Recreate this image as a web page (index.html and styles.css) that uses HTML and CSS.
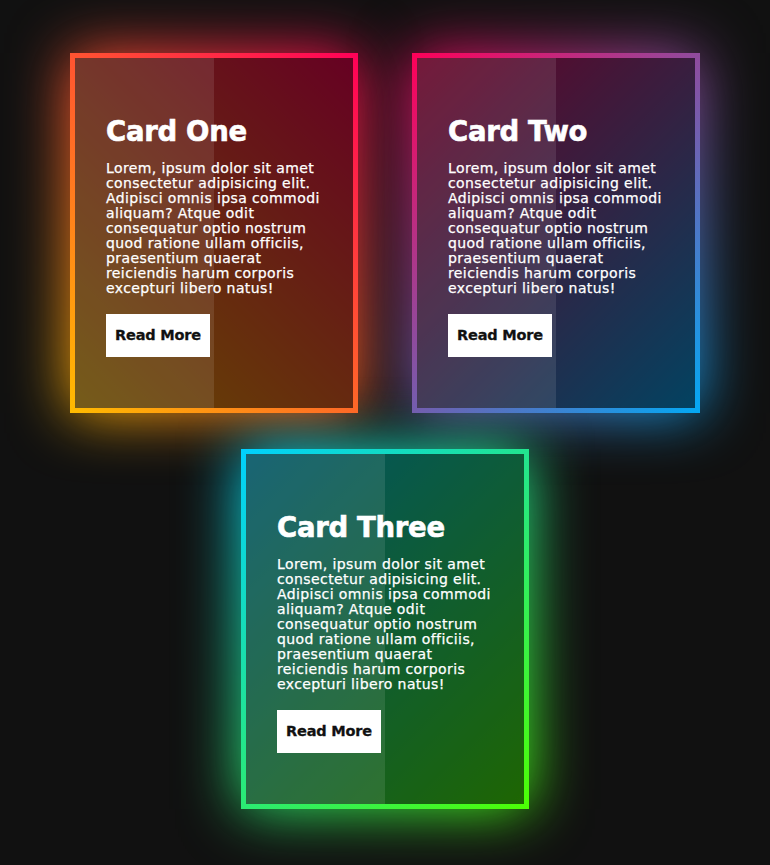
FILE: index.html
```html
<!DOCTYPE html>
<html lang="en">
<head>
<meta charset="utf-8">
<title>Glowing Cards</title>
<link rel="stylesheet" href="styles.css">
</head>
<body>
<main class="grid">
  <article class="card card-one">
    <div class="inner">
      <h2 class="title">Card One</h2>
      <p class="text">Lorem, ipsum dolor sit amet<br>consectetur adipisicing elit.<br>Adipisci omnis ipsa commodi<br>aliquam? Atque odit<br>consequatur optio nostrum<br>quod ratione ullam officiis,<br>praesentium quaerat<br>reiciendis harum corporis<br>excepturi libero natus!</p>
      <a class="btn" href="#">Read More</a>
    </div>
  </article>
  <article class="card card-two">
    <div class="inner">
      <h2 class="title">Card Two</h2>
      <p class="text">Lorem, ipsum dolor sit amet<br>consectetur adipisicing elit.<br>Adipisci omnis ipsa commodi<br>aliquam? Atque odit<br>consequatur optio nostrum<br>quod ratione ullam officiis,<br>praesentium quaerat<br>reiciendis harum corporis<br>excepturi libero natus!</p>
      <a class="btn" href="#">Read More</a>
    </div>
  </article>
  <article class="card card-three">
    <div class="inner">
      <h2 class="title">Card Three</h2>
      <p class="text">Lorem, ipsum dolor sit amet<br>consectetur adipisicing elit.<br>Adipisci omnis ipsa commodi<br>aliquam? Atque odit<br>consequatur optio nostrum<br>quod ratione ullam officiis,<br>praesentium quaerat<br>reiciendis harum corporis<br>excepturi libero natus!</p>
      <a class="btn" href="#">Read More</a>
    </div>
  </article>
</main>
</body>
</html>
```
FILE: styles.css
```css
* { box-sizing: border-box; }
html, body { margin: 0; padding: 0; }
body {
  background: #111111;
  font-family: "DejaVu Sans", "Noto Sans", sans-serif;
  color: #fff;
  min-height: 865px;
}
.grid {
  display: flex;
  flex-wrap: wrap;
  justify-content: center;
  column-gap: 54px;
  row-gap: 36px;
  padding: 53px 70px 0;
}
.card {
  position: relative;
  width: 288px;
  height: 360px;
  padding: 5px;
}
.card::after {
  content: "";
  position: absolute;
  inset: 0;
  background: inherit;
  filter: blur(30px);
  z-index: -1;
}
.card-one { background: linear-gradient(45deg, #ffbc00, #ff0058); }
.card-two { background: linear-gradient(315deg, #03a9f4, #ff0058); }
.card-three { background: linear-gradient(315deg, #4dff03, #00d0ff); }
.inner {
  position: relative;
  height: 100%;
  background: rgba(0, 0, 0, 0.6);
  padding: 53px 0 0 31px;
  display: flex;
  flex-direction: column;
  align-items: flex-start;
}
.inner::before {
  content: "";
  position: absolute;
  top: 0;
  left: 0;
  width: 50%;
  height: 100%;
  background: rgba(255, 255, 255, 0.1);
  pointer-events: none;
}
.title {
  position: relative;
  margin: 0;
  font-size: 27.5px;
  line-height: 40px;
  font-weight: 700;
  letter-spacing: -0.3px;
  -webkit-text-stroke: 0.6px #fff;
}
.text {
  position: relative;
  margin: 10px 0 0;
  font-size: 14px;
  line-height: 15px;
  letter-spacing: 0.4px;
  white-space: nowrap;
  -webkit-text-stroke: 0.25px #fff;
}
.btn {
  position: relative;
  margin-top: 18px;
  display: block;
  width: 104px;
  height: 43px;
  line-height: 43px;
  text-align: center;
  background: #fff;
  color: #111;
  font-weight: 700;
  font-size: 14.5px;
  letter-spacing: -0.2px;
  text-decoration: none;
  -webkit-text-stroke: 0.3px #111;
}
```
